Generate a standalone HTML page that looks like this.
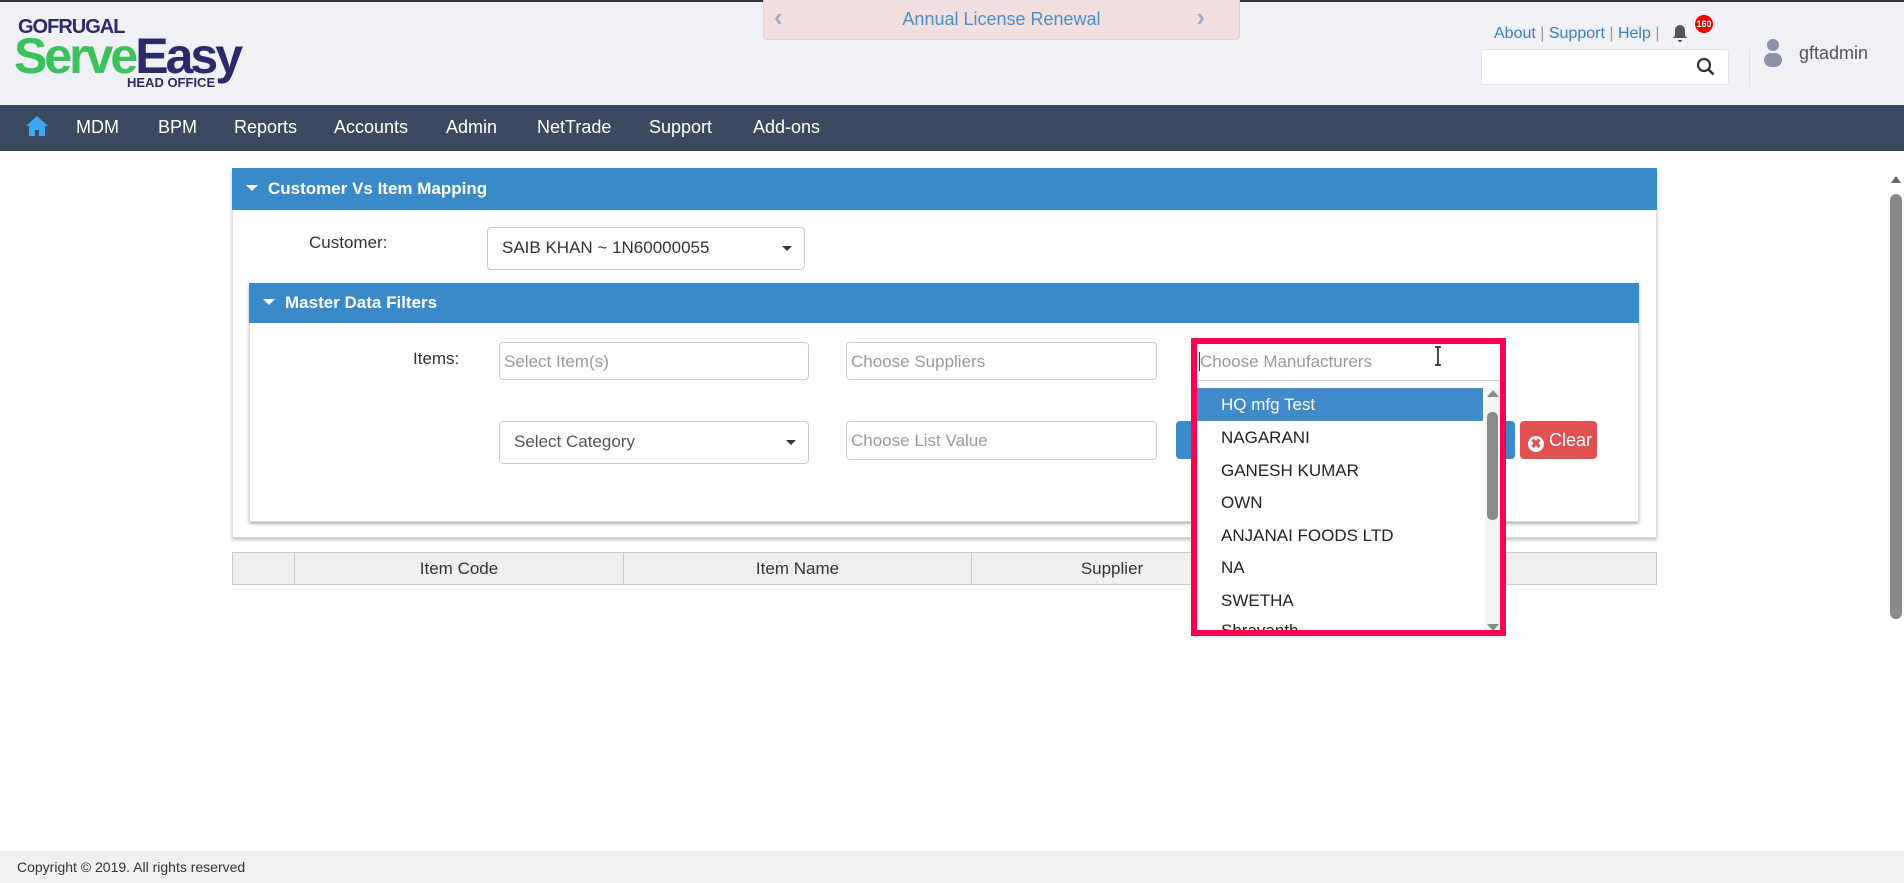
<!DOCTYPE html>
<html><head><meta charset="utf-8"><style>
*{box-sizing:border-box;margin:0;padding:0}
body{width:1904px;height:883px;position:relative;overflow:hidden;background:#fff;font-family:"Liberation Sans",sans-serif;color:#333}
.abs{position:absolute}
.hdr{left:0;top:0;width:1904px;height:105px;background:#f0f1f6;border-top:2px solid #333}
.nav{left:0;top:105px;width:1904px;height:46px;background:#3b4a5f}
.nav span{position:absolute;top:12px;color:#fff;font-size:18px}
.inp{background:#fff;border:1px solid #ccc;border-radius:4px;font-size:17px;color:#999;padding:9px 4px}
.sel{background:#fff;border:1px solid #ccc;border-radius:4px;font-size:17px;color:#333;padding:10px 14px}
.caret{position:absolute;right:12px;top:18px;border-left:5px solid transparent;border-right:5px solid transparent;border-top:5px solid #333}
.bh{background:#3a89c9;color:#fff;font-weight:bold;font-size:17px}
.tri{display:inline-block;border-left:6px solid transparent;border-right:6px solid transparent;border-top:6px solid #fff;margin:0 10px 3px 14px}
.th{position:absolute;top:0;height:32px;border-right:1px solid #ccc;text-align:center;font-size:17px;line-height:31px;color:#333}
.it{position:absolute;left:0;width:286px;height:33px;font-size:17px;line-height:33px;padding-left:24px;color:#222}
</style></head><body>
<div class="abs hdr"></div>
<div class="abs" style="left:18px;top:16px;font-size:20px;font-weight:bold;color:#2b2a6b;letter-spacing:-1px">GOFRUGAL</div>
<div class="abs" style="left:14px;top:30px;font-size:50px;font-weight:bold;letter-spacing:-3px;line-height:52px"><span style="color:#3cc25a">Serve</span><span style="color:#2b2a6b">Easy</span></div>
<div class="abs" style="left:127px;top:75px;font-size:13px;font-weight:bold;color:#2b2a6b">HEAD OFFICE</div>
<div class="abs" style="left:763px;top:0;width:477px;height:40px;background:#f2dede;border:1px solid #ebccd1;border-top:none;border-radius:0 0 4px 4px;color:#4a90c8;font-size:18px;text-align:center;line-height:38px">Annual License Renewal
<span style="position:absolute;left:10px;top:-2px;color:#9ab0c8;font-weight:bold;font-size:26px">&#8249;</span><span style="position:absolute;right:34px;top:-2px;color:#9ab0c8;font-weight:bold;font-size:26px">&#8250;</span></div>
<div class="abs" style="left:1494px;top:25px;font-size:16px;color:#3a7fc0">About <span style="color:#999">|</span> Support <span style="color:#999">|</span> Help <span style="color:#999">|</span></div>
<svg class="abs" style="left:1671px;top:24px" width="18" height="20" viewBox="0 0 18 20"><path d="M9 1c-3 0-5 2.5-5 5.5v5L2 14h14l-2-2.5v-5C14 3.5 12 1 9 1z M7 16h4c0 1.2-1 2-2 2s-2-.8-2-2z" fill="#555"/></svg>
<div class="abs" style="left:1695px;top:15px;width:18px;height:18px;border-radius:50%;background:#e00;color:#fff;font-size:9px;font-weight:bold;text-align:center;line-height:18px">160</div>
<div class="abs" style="left:1481px;top:49px;width:248px;height:36px;background:#fff;border:1px solid #e2e2e2;border-radius:3px"></div>
<svg class="abs" style="left:1696px;top:57px" width="20" height="20" viewBox="0 0 20 20"><circle cx="8" cy="8" r="6" fill="none" stroke="#333" stroke-width="2.2"/><path d="M12.5 12.5l5 5" stroke="#333" stroke-width="2.5"/></svg>
<div class="abs" style="left:1749px;top:50px;width:1px;height:36px;background:#ddd"></div>
<svg class="abs" style="left:1762px;top:38px" width="22" height="32" viewBox="0 0 22 32"><circle cx="11" cy="7" r="6" fill="#8a93a8"/><rect x="2" y="15" width="18" height="14" rx="7" fill="#8a93a8"/></svg>
<div class="abs" style="left:1799px;top:43px;font-size:18px;color:#555">gftadmin</div>

<div class="abs nav">
<svg class="abs" style="left:25px;top:9px" width="24" height="24" viewBox="0 0 24 24"><path d="M12 2L1 12h3v10h6v-6h4v6h6V12h3z" fill="#3ea4f4"/></svg>
<span style="left:76px">MDM</span><span style="left:158px">BPM</span><span style="left:234px">Reports</span><span style="left:334px">Accounts</span><span style="left:446px">Admin</span><span style="left:537px">NetTrade</span><span style="left:649px">Support</span><span style="left:753px">Add-ons</span></div>

<div class="abs" style="left:232px;top:168px;width:1425px;height:370px;border:1px solid #ddd;box-shadow:0 2px 3px rgba(0,0,0,.25)"></div>
<div class="abs bh" style="left:232px;top:168px;width:1425px;height:42px;line-height:42px"><span class="tri"></span>Customer Vs Item Mapping</div>
<div class="abs" style="left:309px;top:233px;font-size:17px">Customer:</div>
<div class="abs sel" style="left:487px;top:227px;width:318px;height:43px">SAIB KHAN ~ 1N60000055<span class="caret"></span></div>
<div class="abs" style="left:249px;top:283px;width:1390px;height:239px;border:1px solid #ddd;box-shadow:0 2px 3px rgba(0,0,0,.3);background:#fff"></div>
<div class="abs bh" style="left:249px;top:283px;width:1390px;height:40px;line-height:40px"><span class="tri"></span>Master Data Filters</div>
<div class="abs" style="left:413px;top:349px;font-size:17px">Items:</div>
<div class="abs inp" style="left:499px;top:342px;width:310px;height:38px">Select Item(s)</div>
<div class="abs inp" style="left:846px;top:342px;width:311px;height:38px">Choose Suppliers</div>
<div class="abs sel" style="left:499px;top:421px;width:310px;height:43px;color:#555">Select Category<span class="caret"></span></div>
<div class="abs inp" style="left:846px;top:421px;width:311px;height:39px">Choose List Value</div>
<div class="abs" style="left:1176px;top:421px;width:339px;height:38px;background:#3a89c9;border-radius:4px"></div>
<div class="abs" style="left:1520px;top:421px;width:77px;height:38px;background:#e05252;border-radius:4px;color:#fff;font-size:18px;line-height:38px;padding-left:8px"><span style="display:inline-block;width:16px;height:16px;border-radius:50%;background:#fff;color:#e05252;font-size:13px;line-height:16px;text-align:center;font-weight:bold;vertical-align:-2px">&#10006;</span> Clear</div>

<div class="abs" style="left:232px;top:552px;width:1425px;height:33px;background:#efefef;border:1px solid #ccc">
<div class="th" style="left:0;width:62px"></div><div class="th" style="left:62px;width:329px">Item Code</div><div class="th" style="left:391px;width:348px">Item Name</div><div class="th" style="left:739px;width:280px;border:none">Supplier</div></div>

<div class="abs" style="left:1191px;top:338px;width:315px;height:298px;border:6px solid #ff0050;background:#fff;overflow:hidden">
<div class="abs" style="left:0;top:0;width:303px;height:37px;border-bottom:1px solid #ccc;font-size:17px;color:#999;line-height:36px;padding-left:2px"><span style="border-left:1px solid #333">Choose Manufacturers</span></div>
<div class="abs" style="left:0;top:44px;width:303px;height:250px">
<div class="it" style="top:0;background:#428bca;color:#fff">HQ mfg Test</div>
<div class="it" style="top:33px">NAGARANI</div><div class="it" style="top:66px">GANESH KUMAR</div><div class="it" style="top:98px">OWN</div><div class="it" style="top:131px">ANJANAI FOODS LTD</div><div class="it" style="top:163px">NA</div><div class="it" style="top:196px">SWETHA</div><div class="it" style="top:226px">Shravanth</div>
<div class="abs" style="left:288px;top:0;width:15px;height:250px;background:#f5f5f5"></div>
<div class="abs" style="left:290px;top:2px;border-left:6px solid transparent;border-right:6px solid transparent;border-bottom:7px solid #888"></div>
<div class="abs" style="left:290px;top:24px;width:11px;height:108px;background:#8a8a8a;border-radius:5px"></div>
<div class="abs" style="left:290px;top:236px;border-left:6px solid transparent;border-right:6px solid transparent;border-top:7px solid #888"></div>
</div></div>
<svg class="abs" style="left:1433px;top:346px" width="10" height="20" viewBox="0 0 10 20"><path d="M2 1h6M5 1v18M2 19h6" stroke="#111" stroke-width="1.5" fill="none"/></svg>

<div class="abs" style="left:1888px;top:170px;width:16px;height:680px;background:#fff"></div>
<div class="abs" style="left:1891px;top:176px;border-left:5px solid transparent;border-right:5px solid transparent;border-bottom:7px solid #666"></div>
<div class="abs" style="left:1890px;top:194px;width:12px;height:425px;background:#8a8a8a;border-radius:6px"></div>
<div class="abs" style="left:0;top:851px;width:1904px;height:32px;background:#f0f0f0;font-size:14px;line-height:32px;padding-left:17px;color:#333">Copyright © 2019. All rights reserved</div>
</body></html>
